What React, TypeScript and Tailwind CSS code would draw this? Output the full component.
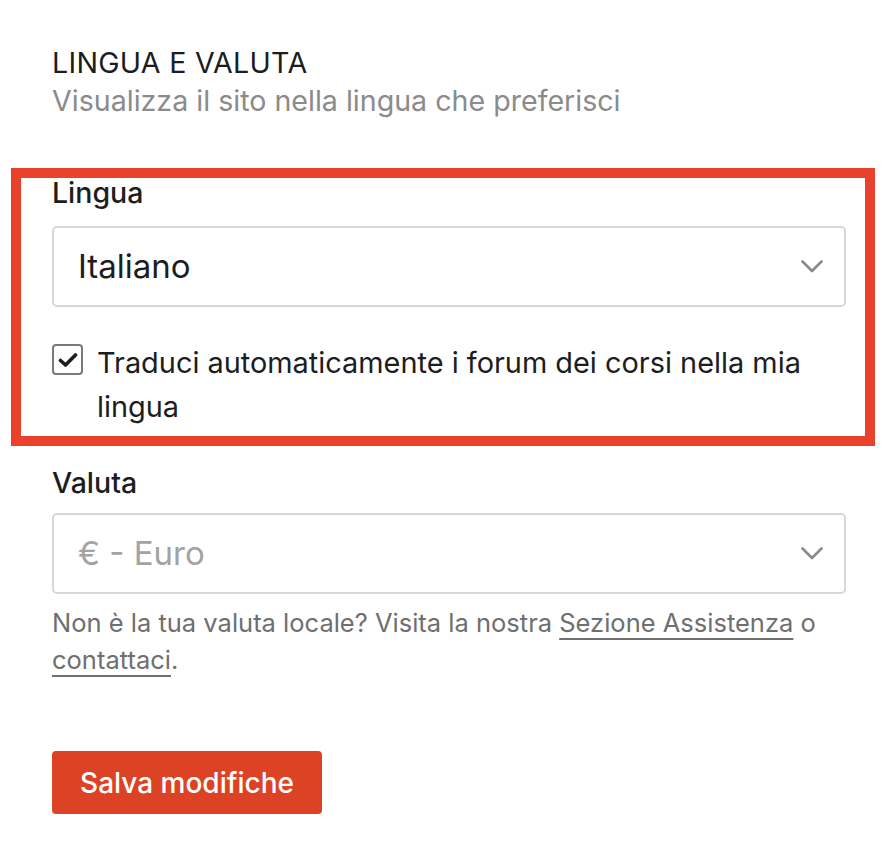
import React from "react";

function Chevron() {
  return (
    <svg width="22" height="13" viewBox="0 0 22 13" fill="none" className="shrink-0">
      <path d="M1.5 1.5 L11 11 L20.5 1.5" stroke="#8a8a8a" strokeWidth="2.6" strokeLinecap="round" strokeLinejoin="round" />
    </svg>
  );
}

function Select({ value, muted }: { value: string; muted?: boolean }) {
  return (
    <div className="flex h-[81px] w-[794px] items-center justify-between rounded-[5px] border-2 border-[#d7d7d7] bg-white pl-[24px] pr-[21px]">
      <span className={muted ? "text-[33px] text-[#a3a3a3]" : "text-[33px] text-[#1c1d1f]"}>{value}</span>
      <Chevron />
    </div>
  );
}

export default function App() {
  return (
    <div
      className="min-h-[852px] w-[890px] bg-white text-[#1c1d1f]"
      style={{ fontFamily: "Inter, 'Noto Sans', sans-serif" }}
    >
      <div className="pt-[44px]">
        <div className="pl-[52px]">
          <h2 className="text-[28.6px] leading-[38px] font-normal tracking-[0.01em]">LINGUA E VALUTA</h2>
          <p className="text-[28.6px] leading-[38px] text-[#8b8b8b]">Visualizza il sito nella lingua che preferisci</p>
        </div>

        <div className="ml-[11px] mt-[48px] w-[864px] border-[10px] border-[#e9412b] pl-[31px] pr-[19px] pt-0 pb-[7px]">
          <label className="block text-[28.5px] leading-[30px] font-medium">Lingua</label>
          <div className="mt-[18px]">
            <Select value="Italiano" />
          </div>
          <div className="mt-[34px] flex items-start gap-[14px]">
            <div className="mt-[3px] flex h-[31px] w-[31px] shrink-0 items-center justify-center rounded-[4px] border-2 border-[#7a7a7a]">
              <svg width="20" height="16" viewBox="0 0 20 16" fill="none">
                <path d="M2.5 8.5 L7.5 13 L17.5 3" stroke="#1c1d1f" strokeWidth="3.6" strokeLinecap="round" strokeLinejoin="round" />
              </svg>
            </div>
            <p className="text-[28.9px] leading-[44px]">Traduci automaticamente i forum dei corsi nella mia lingua</p>
          </div>
        </div>

        <div className="pl-[52px]">
          <label className="mt-[22px] block text-[28.5px] leading-[30px] font-medium">Valuta</label>
          <div className="mt-[15px]">
            <Select value="€ - Euro" muted />
          </div>
          <p className="mt-[10px] w-[810px] text-[25.5px] leading-[37px] text-[#6f6f6f]">
            Non è la tua valuta locale? Visita la nostra{" "}
            <a className="underline decoration-[2px] underline-offset-[6px]">Sezione Assistenza</a> o{" "}
            <a className="underline decoration-[2px] underline-offset-[6px]">contattaci</a>.
          </p>
          <button className="mt-[73px] flex h-[63px] w-[270px] items-center justify-center rounded-[4px] bg-[#dc4324] text-[28px] font-medium text-white">
            Salva modifiche
          </button>
        </div>
      </div>
    </div>
  );
}
